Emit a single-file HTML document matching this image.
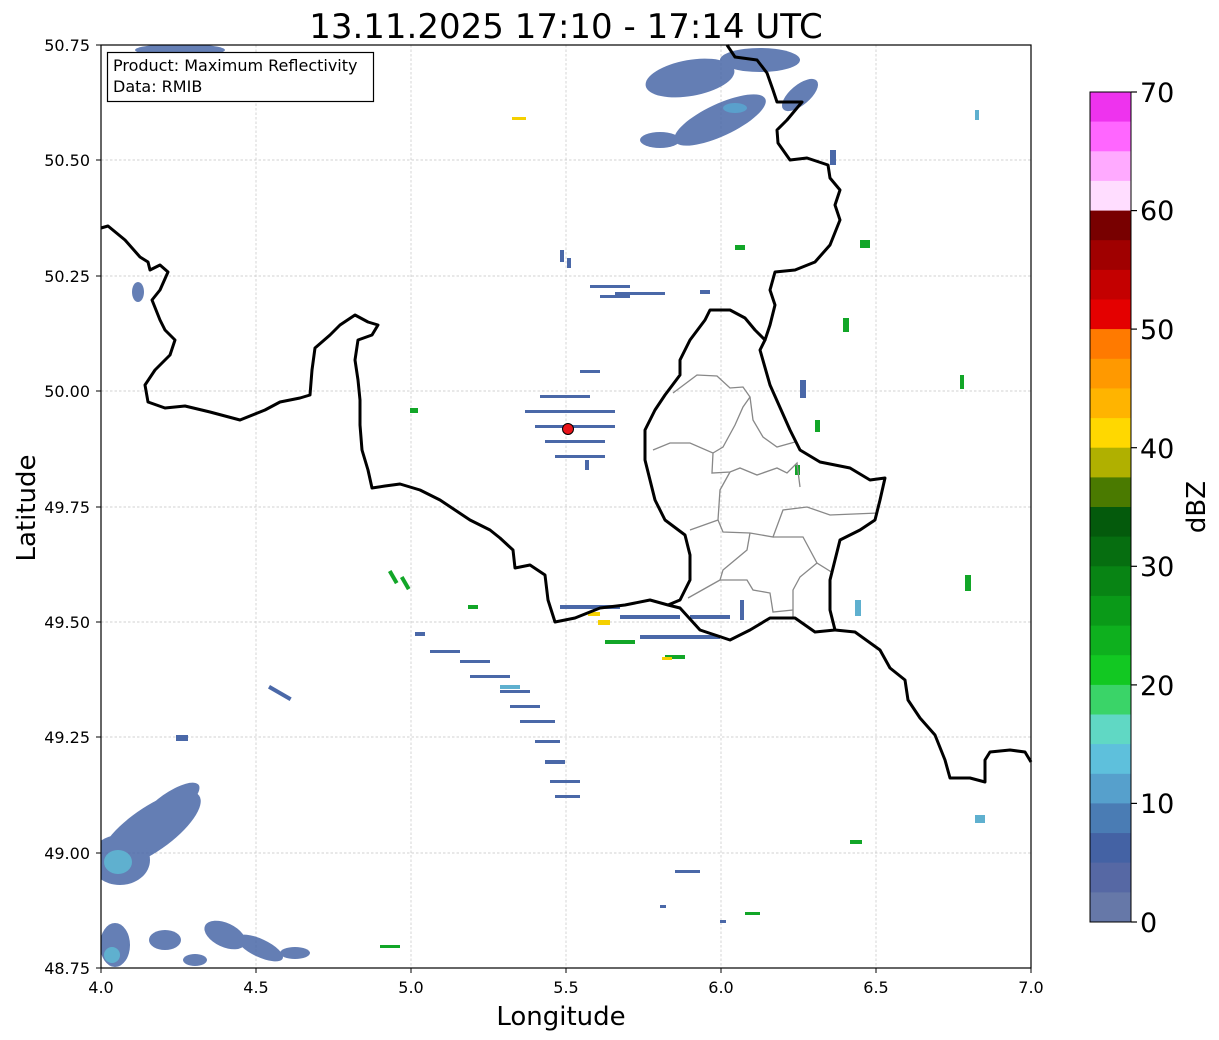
<!DOCTYPE html>
<html><head><meta charset="utf-8"><style>
html,body{margin:0;padding:0;background:#fff;}
svg{display:block;font-family:"DejaVu Sans","Liberation Sans",sans-serif;}
</style></head><body>
<svg width="1219" height="1040" viewBox="0 0 1219 1040" xmlns="http://www.w3.org/2000/svg">
<rect width="1219" height="1040" fill="#fff"/>
<text x="566" y="38" font-size="34" text-anchor="middle" fill="#000">13.11.2025 17:10 - 17:14 UTC</text>
<g stroke="#c4c4c4" stroke-width="0.7" stroke-dasharray="2.5,2">
<line x1="256" y1="45" x2="256" y2="968"/><line x1="411" y1="45" x2="411" y2="968"/><line x1="566" y1="45" x2="566" y2="968"/><line x1="721" y1="45" x2="721" y2="968"/><line x1="876" y1="45" x2="876" y2="968"/>
<line x1="101" y1="160" x2="1031" y2="160"/><line x1="101" y1="276" x2="1031" y2="276"/><line x1="101" y1="391" x2="1031" y2="391"/><line x1="101" y1="507" x2="1031" y2="507"/><line x1="101" y1="622" x2="1031" y2="622"/><line x1="101" y1="737" x2="1031" y2="737"/><line x1="101" y1="853" x2="1031" y2="853"/>
</g>
<clipPath id="ax"><rect x="101" y="45" width="930" height="923"/></clipPath>
<g clip-path="url(#ax)">
<g fill="#4a68a8" opacity="0.85">
<ellipse cx="150" cy="830" rx="60" ry="22" transform="rotate(-35 150 830)"/>
<ellipse cx="170" cy="805" rx="35" ry="12" transform="rotate(-35 170 805)"/>
<ellipse cx="120" cy="860" rx="30" ry="25"/>
<ellipse cx="115" cy="945" rx="15" ry="22"/>
<ellipse cx="165" cy="940" rx="16" ry="10"/>
<ellipse cx="225" cy="935" rx="22" ry="12" transform="rotate(25 225 935)"/>
<ellipse cx="260" cy="948" rx="25" ry="9" transform="rotate(25 260 948)"/>
<ellipse cx="295" cy="953" rx="15" ry="6"/>
<ellipse cx="195" cy="960" rx="12" ry="6"/>
</g>
<ellipse cx="118" cy="862" rx="14" ry="12" fill="#5fb0cf"/>
<ellipse cx="112" cy="955" rx="8" ry="8" fill="#5fb0cf"/>
<g fill="#4a68a8" opacity="0.85">
<ellipse cx="690" cy="78" rx="45" ry="18" transform="rotate(-10 690 78)"/>
<ellipse cx="760" cy="60" rx="40" ry="12"/>
<ellipse cx="720" cy="120" rx="50" ry="16" transform="rotate(-25 720 120)"/>
<ellipse cx="800" cy="95" rx="22" ry="10" transform="rotate(-40 800 95)"/>
<ellipse cx="660" cy="140" rx="20" ry="8"/>
<ellipse cx="180" cy="50" rx="45" ry="6"/>
<ellipse cx="138" cy="292" rx="6" ry="10"/>
</g>
<ellipse cx="735" cy="108" rx="12" ry="5" fill="#5aa0cc"/>
<g fill="#4a68a8">
<rect x="560" y="250" width="4" height="12"/><rect x="567" y="258" width="4" height="10"/>
<rect x="590" y="285" width="40" height="3"/><rect x="615" y="292" width="50" height="3"/><rect x="600" y="295" width="30" height="3"/>
<rect x="580" y="370" width="20" height="3"/><rect x="540" y="395" width="50" height="3"/><rect x="525" y="410" width="90" height="3"/><rect x="535" y="425" width="80" height="3"/><rect x="545" y="440" width="60" height="3"/><rect x="555" y="455" width="50" height="3"/><rect x="585" y="460" width="4" height="10"/>
<rect x="415" y="632" width="10" height="4"/><rect x="430" y="650" width="30" height="3"/><rect x="460" y="660" width="30" height="3"/><rect x="470" y="675" width="40" height="3"/><rect x="500" y="690" width="30" height="3"/><rect x="510" y="705" width="30" height="3"/><rect x="520" y="720" width="35" height="3"/><rect x="535" y="740" width="25" height="3"/><rect x="545" y="760" width="20" height="4"/><rect x="550" y="780" width="30" height="3"/><rect x="555" y="795" width="25" height="3"/>
<rect x="560" y="605" width="60" height="4"/><rect x="620" y="615" width="60" height="4"/><rect x="640" y="635" width="80" height="4"/><rect x="690" y="615" width="40" height="4"/>
<rect x="740" y="600" width="4" height="20"/><rect x="270" y="685" width="25" height="4" transform="rotate(30 270 685)"/>
<rect x="176" y="735" width="12" height="6"/><rect x="830" y="150" width="6" height="15"/><rect x="800" y="380" width="6" height="18"/><rect x="700" y="290" width="10" height="4"/><rect x="675" y="870" width="25" height="3"/><rect x="720" y="920" width="6" height="3"/><rect x="660" y="905" width="6" height="3"/>
</g>
<g fill="#12a628">
<rect x="410" y="408" width="8" height="5"/><rect x="388" y="572" width="4" height="14" transform="rotate(-30 388 572)"/><rect x="400" y="578" width="4" height="14" transform="rotate(-30 400 578)"/>
<rect x="605" y="640" width="30" height="4"/><rect x="665" y="655" width="20" height="4"/><rect x="735" y="245" width="10" height="5"/><rect x="860" y="240" width="10" height="8"/><rect x="843" y="318" width="6" height="14"/><rect x="815" y="420" width="5" height="12"/><rect x="795" y="465" width="5" height="10"/><rect x="965" y="575" width="6" height="16"/><rect x="850" y="840" width="12" height="4"/><rect x="960" y="375" width="4" height="14"/><rect x="468" y="605" width="10" height="4"/><rect x="380" y="945" width="20" height="3"/><rect x="745" y="912" width="15" height="3"/>
</g>
<g fill="#5fb0cf"><rect x="500" y="685" width="20" height="4"/><rect x="975" y="815" width="10" height="8"/><rect x="855" y="600" width="6" height="16"/><rect x="975" y="110" width="4" height="10"/></g>
<g fill="#f5d000"><rect x="598" y="620" width="12" height="5"/><rect x="588" y="612" width="12" height="4"/><rect x="662" y="657" width="10" height="3"/><rect x="512" y="117" width="14" height="3"/></g>
</g>
<g fill="none" stroke="#888" stroke-width="1.3">
<polyline points="673,393 697,375 717,376 730,388 743,387 750,397 743,407 735,425 723,447 713,453"/>
<polyline points="653,450 670,443 690,443 713,453 712,473 730,472 740,468 757,475 777,468 787,473 797,463 800,487"/>
<polyline points="750,397 753,420 763,437 777,447 795,442"/>
<polyline points="730,472 720,490 718,520 690,530"/>
<polyline points="718,520 723,532 750,533 773,537 783,510 807,507 830,515 878,513"/>
<polyline points="750,533 747,550 723,570 720,580 688,598"/>
<polyline points="773,537 803,537 817,563 833,573"/>
<polyline points="817,563 800,577 793,590 793,617"/>
<polyline points="720,580 747,580 753,590 770,593 773,612 793,610"/>
</g>
<g fill="none" stroke="#000" stroke-width="3" stroke-linejoin="round">
<polyline points="101,228 108,226 125,240 140,257 148,262 150,270 160,265 168,272 160,290 152,300 160,320 165,330 175,340 170,355 155,370 145,385 148,402 165,408 185,406 210,412 240,420 265,410 280,402 300,398 310,395 312,370 315,348 330,335 340,325 355,315 368,322 378,325 372,335 358,340 355,360 358,380 360,400 360,425 362,450 368,470 372,488 385,486 400,484 420,490 440,500 470,520 490,530 500,538 513,550 515,568 530,565 545,575 548,600 555,622 575,618 600,608 625,605 650,600 668,605 680,600 690,580 690,555 685,535 665,520 655,500 650,480 645,460 645,430 655,410 665,395 680,375 680,360 690,340 705,320 710,310 730,310 745,318 755,330 765,340 770,325 775,305 770,290 775,272 795,270 815,262 830,245 840,220 835,205 840,190 830,178 828,165 807,158 790,160 778,143 777,130 787,120 802,102 777,102 773,90 767,73 757,60 735,57 727,45"/>
<polyline points="765,340 760,350 770,385 790,430 800,450 820,462 850,468 870,480 885,478 880,500 875,520 860,530 840,540 835,560 830,580 830,610 835,630 815,632 795,618 770,618 750,630 730,640 700,630 680,608 668,605"/>
<polyline points="835,630 855,632 880,650 890,668 905,680 908,700 920,718 935,735 945,760 950,778 970,778 985,782 985,760 990,752 1010,750 1025,752 1031,762"/>
</g>
<circle cx="568" cy="429" r="5.5" fill="#e8141a" stroke="#000" stroke-width="1"/>
<rect x="107.5" y="52.5" width="266" height="49" fill="#fff" stroke="#000" stroke-width="1.2"/>
<text x="113" y="71" font-size="16">Product: Maximum Reflectivity</text>
<text x="113" y="92" font-size="16">Data: RMIB</text>
<rect x="101" y="45" width="930" height="923" fill="none" stroke="#000" stroke-width="1.2"/>
<g stroke="#000" stroke-width="1">
<line x1="101" y1="968" x2="101" y2="973"/><line x1="256" y1="968" x2="256" y2="973"/><line x1="411" y1="968" x2="411" y2="973"/><line x1="566" y1="968" x2="566" y2="973"/><line x1="721" y1="968" x2="721" y2="973"/><line x1="876" y1="968" x2="876" y2="973"/><line x1="1031" y1="968" x2="1031" y2="973"/>
<line x1="96" y1="45" x2="101" y2="45"/><line x1="96" y1="160" x2="101" y2="160"/><line x1="96" y1="276" x2="101" y2="276"/><line x1="96" y1="391" x2="101" y2="391"/><line x1="96" y1="507" x2="101" y2="507"/><line x1="96" y1="622" x2="101" y2="622"/><line x1="96" y1="737" x2="101" y2="737"/><line x1="96" y1="853" x2="101" y2="853"/><line x1="96" y1="968" x2="101" y2="968"/>
</g>
<g font-size="16" text-anchor="middle">
<text x="101" y="993">4.0</text><text x="256" y="993">4.5</text><text x="411" y="993">5.0</text><text x="566" y="993">5.5</text><text x="721" y="993">6.0</text><text x="876" y="993">6.5</text><text x="1031" y="993">7.0</text>
</g>
<g font-size="16" text-anchor="end">
<text x="90" y="51">50.75</text><text x="90" y="166">50.50</text><text x="90" y="282">50.25</text><text x="90" y="397">50.00</text><text x="90" y="513">49.75</text><text x="90" y="628">49.50</text><text x="90" y="743">49.25</text><text x="90" y="859">49.00</text><text x="90" y="974">48.75</text>
</g>
<text x="561" y="1025" font-size="26" text-anchor="middle">Longitude</text>
<text transform="translate(35 508) rotate(-90)" font-size="26" text-anchor="middle">Latitude</text>
<g>
<rect x="1090" y="92.0" width="41" height="30.2" fill="#ee33ee"/>
<rect x="1090" y="121.6" width="41" height="30.2" fill="#ff66ff"/>
<rect x="1090" y="151.3" width="41" height="30.2" fill="#ffaaff"/>
<rect x="1090" y="180.9" width="41" height="30.2" fill="#ffddff"/>
<rect x="1090" y="210.6" width="41" height="30.2" fill="#780000"/>
<rect x="1090" y="240.2" width="41" height="30.2" fill="#a00000"/>
<rect x="1090" y="269.9" width="41" height="30.2" fill="#c40000"/>
<rect x="1090" y="299.5" width="41" height="30.2" fill="#e40000"/>
<rect x="1090" y="329.1" width="41" height="30.2" fill="#ff7a00"/>
<rect x="1090" y="358.8" width="41" height="30.2" fill="#ff9900"/>
<rect x="1090" y="388.4" width="41" height="30.2" fill="#ffb400"/>
<rect x="1090" y="418.1" width="41" height="30.2" fill="#ffd800"/>
<rect x="1090" y="447.7" width="41" height="30.2" fill="#b0b000"/>
<rect x="1090" y="477.4" width="41" height="30.2" fill="#4a7a00"/>
<rect x="1090" y="507.0" width="41" height="30.2" fill="#045a0c"/>
<rect x="1090" y="536.6" width="41" height="30.2" fill="#066e10"/>
<rect x="1090" y="566.3" width="41" height="30.2" fill="#088414"/>
<rect x="1090" y="595.9" width="41" height="30.2" fill="#0a9a18"/>
<rect x="1090" y="625.6" width="41" height="30.2" fill="#0eb01e"/>
<rect x="1090" y="655.2" width="41" height="30.2" fill="#12c822"/>
<rect x="1090" y="684.9" width="41" height="30.2" fill="#3ad468"/>
<rect x="1090" y="714.5" width="41" height="30.2" fill="#60d8c4"/>
<rect x="1090" y="744.1" width="41" height="30.2" fill="#5ec0dc"/>
<rect x="1090" y="773.8" width="41" height="30.2" fill="#56a0cc"/>
<rect x="1090" y="803.4" width="41" height="30.2" fill="#4a7cb4"/>
<rect x="1090" y="833.1" width="41" height="30.2" fill="#4462a4"/>
<rect x="1090" y="862.7" width="41" height="30.2" fill="#5668a4"/>
<rect x="1090" y="892.4" width="41" height="29.6" fill="#6678a8"/>
<rect x="1090" y="92" width="41" height="830" fill="none" stroke="#000" stroke-width="1"/>
</g>
<g stroke="#000" stroke-width="1.2">
<line x1="1131" y1="92" x2="1137" y2="92"/><line x1="1131" y1="210.6" x2="1137" y2="210.6"/><line x1="1131" y1="329.1" x2="1137" y2="329.1"/><line x1="1131" y1="447.7" x2="1137" y2="447.7"/><line x1="1131" y1="566.3" x2="1137" y2="566.3"/><line x1="1131" y1="684.9" x2="1137" y2="684.9"/><line x1="1131" y1="803.4" x2="1137" y2="803.4"/><line x1="1131" y1="922" x2="1137" y2="922"/>
</g>
<g font-size="27">
<text x="1140" y="102">70</text><text x="1140" y="220">60</text><text x="1140" y="339">50</text><text x="1140" y="458">40</text><text x="1140" y="576">30</text><text x="1140" y="695">20</text><text x="1140" y="813">10</text><text x="1140" y="932">0</text>
</g>
<text transform="translate(1205 507) rotate(-90)" font-size="26" text-anchor="middle">dBZ</text>
</svg>
</body></html>
